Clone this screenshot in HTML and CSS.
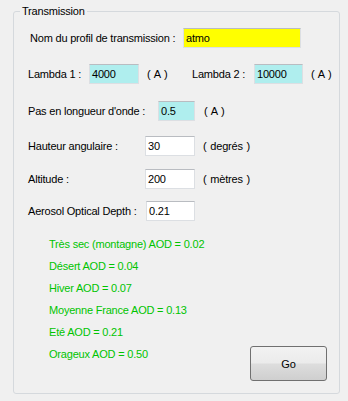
FILE: index.html
```html
<!DOCTYPE html>
<html lang="fr">
<head>
    <meta charset="UTF-8">
    <title>Transmission</title>
    <link rel="stylesheet" href="styles.css">
</head>
<body>
    <div class="group">
        <span class="group-title">Transmission</span>

        <div class="row row-name">
            <span class="label label-name">Nom du profil de transmission :</span>
            <div class="field field-name">atmo</div>
        </div>

        <div class="row row-lambda">
            <span class="label label-l1">Lambda 1 :</span>
            <div class="field field-cyan field-l1">4000</div>
            <span class="unit unit-l1">( A )</span>
            <span class="label label-l2">Lambda 2 :</span>
            <div class="field field-cyan field-l2">10000</div>
            <span class="unit">( A )</span>
        </div>

        <div class="row row-pas">
            <span class="label label-pas">Pas en longueur d'onde :</span>
            <div class="field field-cyan field-pas">0.5</div>
            <span class="unit unit-pas">( A )</span>
        </div>

        <div class="row row-hauteur">
            <span class="label label-mid">Hauteur angulaire :</span>
            <div class="field field-mid">30</div>
            <span class="unit">( degrés )</span>
        </div>

        <div class="row row-altitude">
            <span class="label label-mid">Altitude :</span>
            <div class="field field-mid">200</div>
            <span class="unit">( mètres )</span>
        </div>

        <div class="row row-aod">
            <span class="label label-aod">Aerosol Optical Depth :</span>
            <div class="field field-aod">0.21</div>
        </div>

        <div class="bottom">
            <ul class="aod-list">
                <li>Très sec (montagne) AOD = 0.02</li>
                <li>Désert AOD = 0.04</li>
                <li>Hiver AOD = 0.07</li>
                <li>Moyenne France AOD = 0.13</li>
                <li>Eté AOD = 0.21</li>
                <li>Orageux AOD = 0.50</li>
            </ul>
            <button class="go">Go</button>
        </div>
    </div>
</body>
</html>
```

FILE: styles.css
```css
body {
    margin: 0;
    background: #f0f0f0;
    font-family: "Liberation Sans", Arial, sans-serif;
    font-size: 11px;
    letter-spacing: -0.2px;
    color: #000;
}
.group {
    position: relative;
    box-sizing: border-box;
    width: 327px;
    height: 383px;
    margin: 11px 0 0 13px;
    border: 1px solid #d5d9dd;
    border-radius: 3px;
}
.group-title {
    position: absolute;
    top: -7px;
    left: 6px;
    padding: 0 2px;
    background: #f0f0f0;
    line-height: 13px;
}
.row {
    display: flex;
    align-items: center;
    height: 20px;
    padding-left: 14px;
}
.row-name {
    margin-top: 16px;
    padding-left: 16px;
}
.row-lambda {
    margin-top: 16px;
}
.row-pas {
    margin-top: 17px;
}
.row-hauteur {
    margin-top: 15px;
}
.row-altitude {
    margin-top: 13px;
}
.row-aod {
    margin-top: 12px;
}
.label {
    flex: none;
}
.label-name {
    width: 153px;
}
.label-l1 {
    width: 61px;
}
.label-l2 {
    width: 62px;
}
.label-pas {
    width: 130px;
}
.label-mid {
    width: 117px;
}
.label-aod {
    width: 118px;
}
.field {
    box-sizing: border-box;
    height: 20px;
    line-height: 18px;
    padding-left: 2px;
    border: 1px solid #dcdfe3;
    border-top-color: #b9bcc1;
    background: #fff;
    flex: none;
}
.field-name {
    width: 118px;
    background: #ffff00;
}
.field-cyan {
    background: #afeeee;
}
.field-l1 {
    width: 50px;
}
.field-l2 {
    width: 49px;
}
.field-pas {
    width: 37px;
}
.field-mid {
    width: 50px;
}
.field-aod {
    width: 49px;
}
.unit {
    margin-left: 8px;
    flex: none;
    word-spacing: 1px;
}
.unit-l1 {
    width: 45px;
}
.unit-pas {
    margin-left: 9px;
}
.bottom {
    display: flex;
    align-items: flex-start;
    margin-top: 12px;
}
.aod-list {
    list-style: none;
    margin: 0;
    padding: 0 0 0 35px;
    width: 201px;
    color: #00c400;
}
.aod-list li {
    height: 22px;
    line-height: 22px;
}
.go {
    margin-top: 113px;
    width: 77px;
    height: 35px;
    border: 1px solid #707070;
    border-radius: 3px;
    background: linear-gradient(#f2f2f2, #ebebeb 48%, #dddddd 52%, #cfcfcf);
    font-family: "Liberation Sans", Arial, sans-serif;
    font-size: 11px;
    color: #000;
    padding: 0;
}
```
